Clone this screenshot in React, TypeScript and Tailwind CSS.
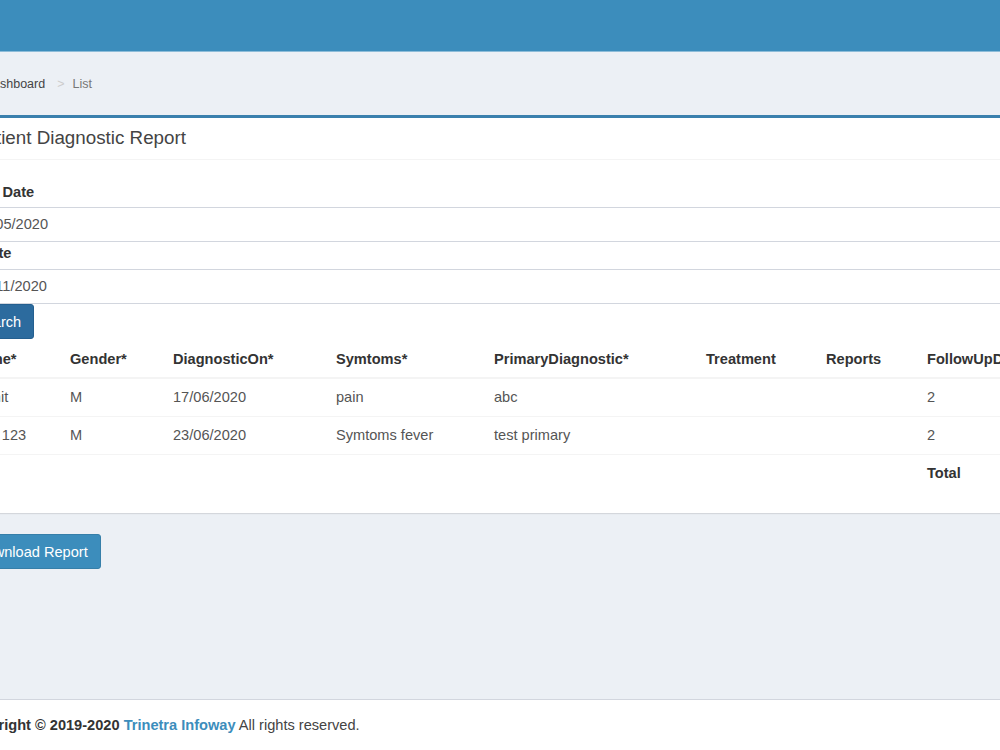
import React from 'react';

const rows = [
    { name: 'Sumit', gender: 'M', on: '17/06/2020', symtoms: 'pain', primary: 'abc', treatment: '', reports: '', followUp: '2' },
    { name: 'Test 123', gender: 'M', on: '23/06/2020', symtoms: 'Symtoms fever', primary: 'test primary', treatment: '', reports: '', followUp: '2' },
];

const headers = ['Name*', 'Gender*', 'DiagnosticOn*', 'Symtoms*', 'PrimaryDiagnostic*', 'Treatment', 'Reports', 'FollowUpDays'];
const widths = ['w-[99px]', 'w-[103px]', 'w-[163px]', 'w-[158px]', 'w-[212px]', 'w-[120px]', 'w-[101px]', 'w-[140px]'];

const cell = 'px-[8px] py-[8px] leading-[21px] whitespace-nowrap';

export default function App() {
    return (
        <div className="h-[750px] w-full overflow-hidden bg-[#ecf0f5] flex flex-col font-['Liberation_Sans',Arial,sans-serif] text-[14.6px] text-[#333]">
            {/* top bar */}
            <header className="h-[52px] shrink-0 bg-[#3c8dbc] border-b border-[#8dbcd8]"></header>

            {/* breadcrumb */}
            <div className="h-[63px] shrink-0 flex items-center pt-[2px] ml-[-16px] text-[12.5px]">
                <span className="text-[#444]">Dashboard</span>
                <span className="text-[#ccc] ml-[12px] mr-[8px]">&gt;</span>
                <span className="text-[#777]">List</span>
            </div>

            {/* box */}
            <div className="ml-[-47px] w-[1200px] shrink-0 bg-white border-t-[3px] border-[#3a80ad] shadow-[0_1px_1px_rgba(0,0,0,0.1)]">
                <div className="h-[42px] pl-[20px] pb-[2px] flex items-center border-b border-[#f4f4f4]">
                    <h3 className="text-[18.8px] leading-[20px] text-[#444]">Patient Diagnostic Report</h3>
                </div>

                <div className="pt-[22px] pb-[21px]">
                    <div className="pl-[9px] w-[1100px]">
                        <label className="block font-bold leading-[20px] mb-[5px]">From Date</label>
                        <div className="h-[35px] border border-[#d2d6de] px-[12px] flex items-center text-[#555]">01/05/2020</div>
                        <label className="block font-bold leading-[20px] mt-[1px] mb-[6px] ml-[-3px]">To Date</label>
                        <div className="h-[35px] border border-[#d2d6de] px-[12px] flex items-center text-[#555]">30/11/2020</div>
                        <button className="h-[35px] px-[12px] border border-[#245f8f] bg-[#2c6b9e] text-white rounded-[3px] leading-[20px]">Search</button>
                    </div>

                    <div className="pl-[10px]">
                        <table className="table-fixed w-[1096px] border-collapse text-left">
                            <colgroup>
                                {widths.map((w, i) => <col key={i} className={w} />)}
                            </colgroup>
                            <thead>
                                <tr>
                                    {headers.map((h) => (
                                        <th key={h} className="px-[8px] pt-[10px] pb-[8px] leading-[20px] font-bold text-[#333] border-b-2 border-[#f4f4f4] whitespace-nowrap">{h}</th>
                                    ))}
                                </tr>
                            </thead>
                            <tbody className="text-[#555]">
                                {rows.map((r) => (
                                    <tr key={r.name} className="border-t border-[#f4f4f4]">
                                        <td className={cell}>{r.name}</td>
                                        <td className={cell}>{r.gender}</td>
                                        <td className={cell}>{r.on}</td>
                                        <td className={cell}>{r.symtoms}</td>
                                        <td className={cell}>{r.primary}</td>
                                        <td className={cell}>{r.treatment}</td>
                                        <td className={cell}>{r.reports}</td>
                                        <td className={cell}>{r.followUp}</td>
                                    </tr>
                                ))}
                                <tr className="border-t border-[#f4f4f4]">
                                    <td colSpan={7} className={cell}></td>
                                    <td className={`${cell} font-bold text-[#333]`}>Total</td>
                                </tr>
                            </tbody>
                        </table>
                    </div>
                </div>
            </div>

            {/* actions */}
            <div className="flex-1 ml-[-38px] pt-[21px]">
                <button className="h-[35px] px-[12px] border border-[#367fa9] bg-[#3c8dbc] text-white rounded-[3px] leading-[20px]">Download Report</button>
            </div>

            {/* footer */}
            <footer className="h-[51px] shrink-0 bg-white border-t border-[#d2d6de] pt-[15px] ml-[-38px] text-[#444] leading-[20px]">
                <strong className="text-[#333]">Copyright &copy; 2019-2020 </strong>
                <a className="text-[#3c8dbc] font-bold">Trinetra Infoway</a> All rights reserved.
            </footer>
        </div>
    );
}
